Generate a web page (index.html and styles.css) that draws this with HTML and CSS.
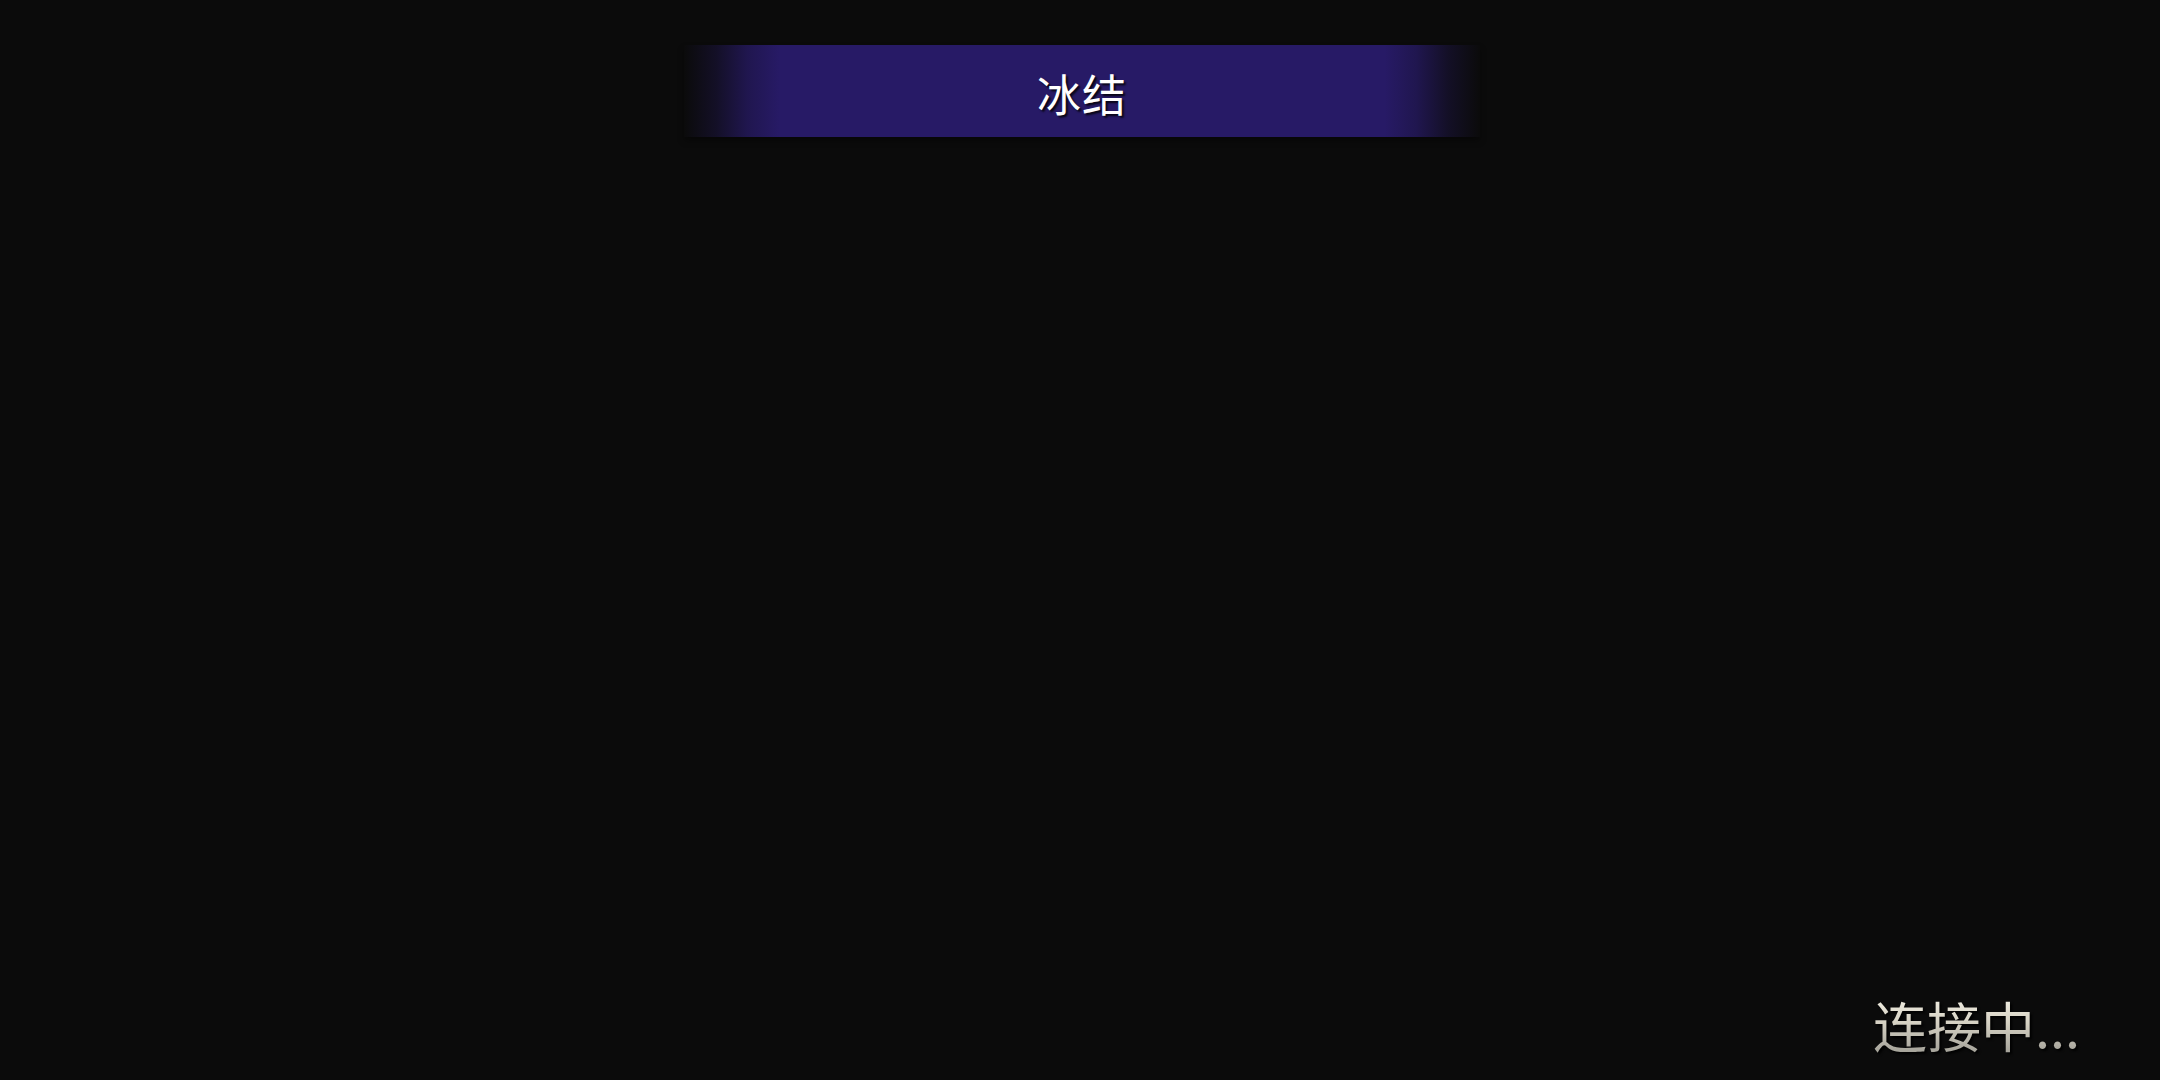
FILE: index.html
```html
<!DOCTYPE html>
<html>
  <head>
    <title>冰结</title>
    <link rel="stylesheet" href="styles.css">
  </head>
  <body>
    <div class="screen">
      <div class="title-banner">
        <span class="title-text">冰结</span>
      </div>
      <div class="status">连接中...</div>
    </div>
  </body>
</html>
```

FILE: styles.css
```css
html, body {
  margin: 0;
  height: 100%;
}
body {
  background-color: #0b0b0b;
  font-family: "Noto Sans CJK SC", "Noto Sans", sans-serif;
  overflow: hidden;
}
.screen {
  display: flex;
  flex-direction: column;
  align-items: center;
  height: 100vh;
  box-sizing: border-box;
  padding: 45px 80px 22px 0;
}
.title-banner {
  width: 796px;
  height: 92px;
  margin-left: 84px;
  display: flex;
  justify-content: center;
  align-items: center;
  background: linear-gradient(to right,
    rgba(39, 26, 102, 0) 0%,
    rgba(39, 26, 102, 0.3) 4%,
    rgba(39, 26, 102, 0.75) 8%,
    #271a66 12%,
    #271a66 88%,
    rgba(39, 26, 102, 0.75) 92%,
    rgba(39, 26, 102, 0.3) 96%,
    rgba(39, 26, 102, 0) 100%);
  box-shadow: 0 4px 6px rgba(0, 0, 0, 0.35);
}
.title-text {
  color: #fff;
  font-size: 44px;
  letter-spacing: 1px;
  padding-top: 4px;
  text-shadow: 2px 2px 2px rgba(0, 0, 0, 0.8);
}
.status {
  margin-top: auto;
  align-self: flex-end;
  font-size: 54px;
  line-height: 1.2;
  background: linear-gradient(to bottom, #f4f1e6 0%, #d6d2c4 45%, #9c9a92 100%);
  -webkit-background-clip: text;
  background-clip: text;
  color: transparent;
  filter: drop-shadow(2px 2px 1px rgba(0, 0, 0, 0.9));
}
```
